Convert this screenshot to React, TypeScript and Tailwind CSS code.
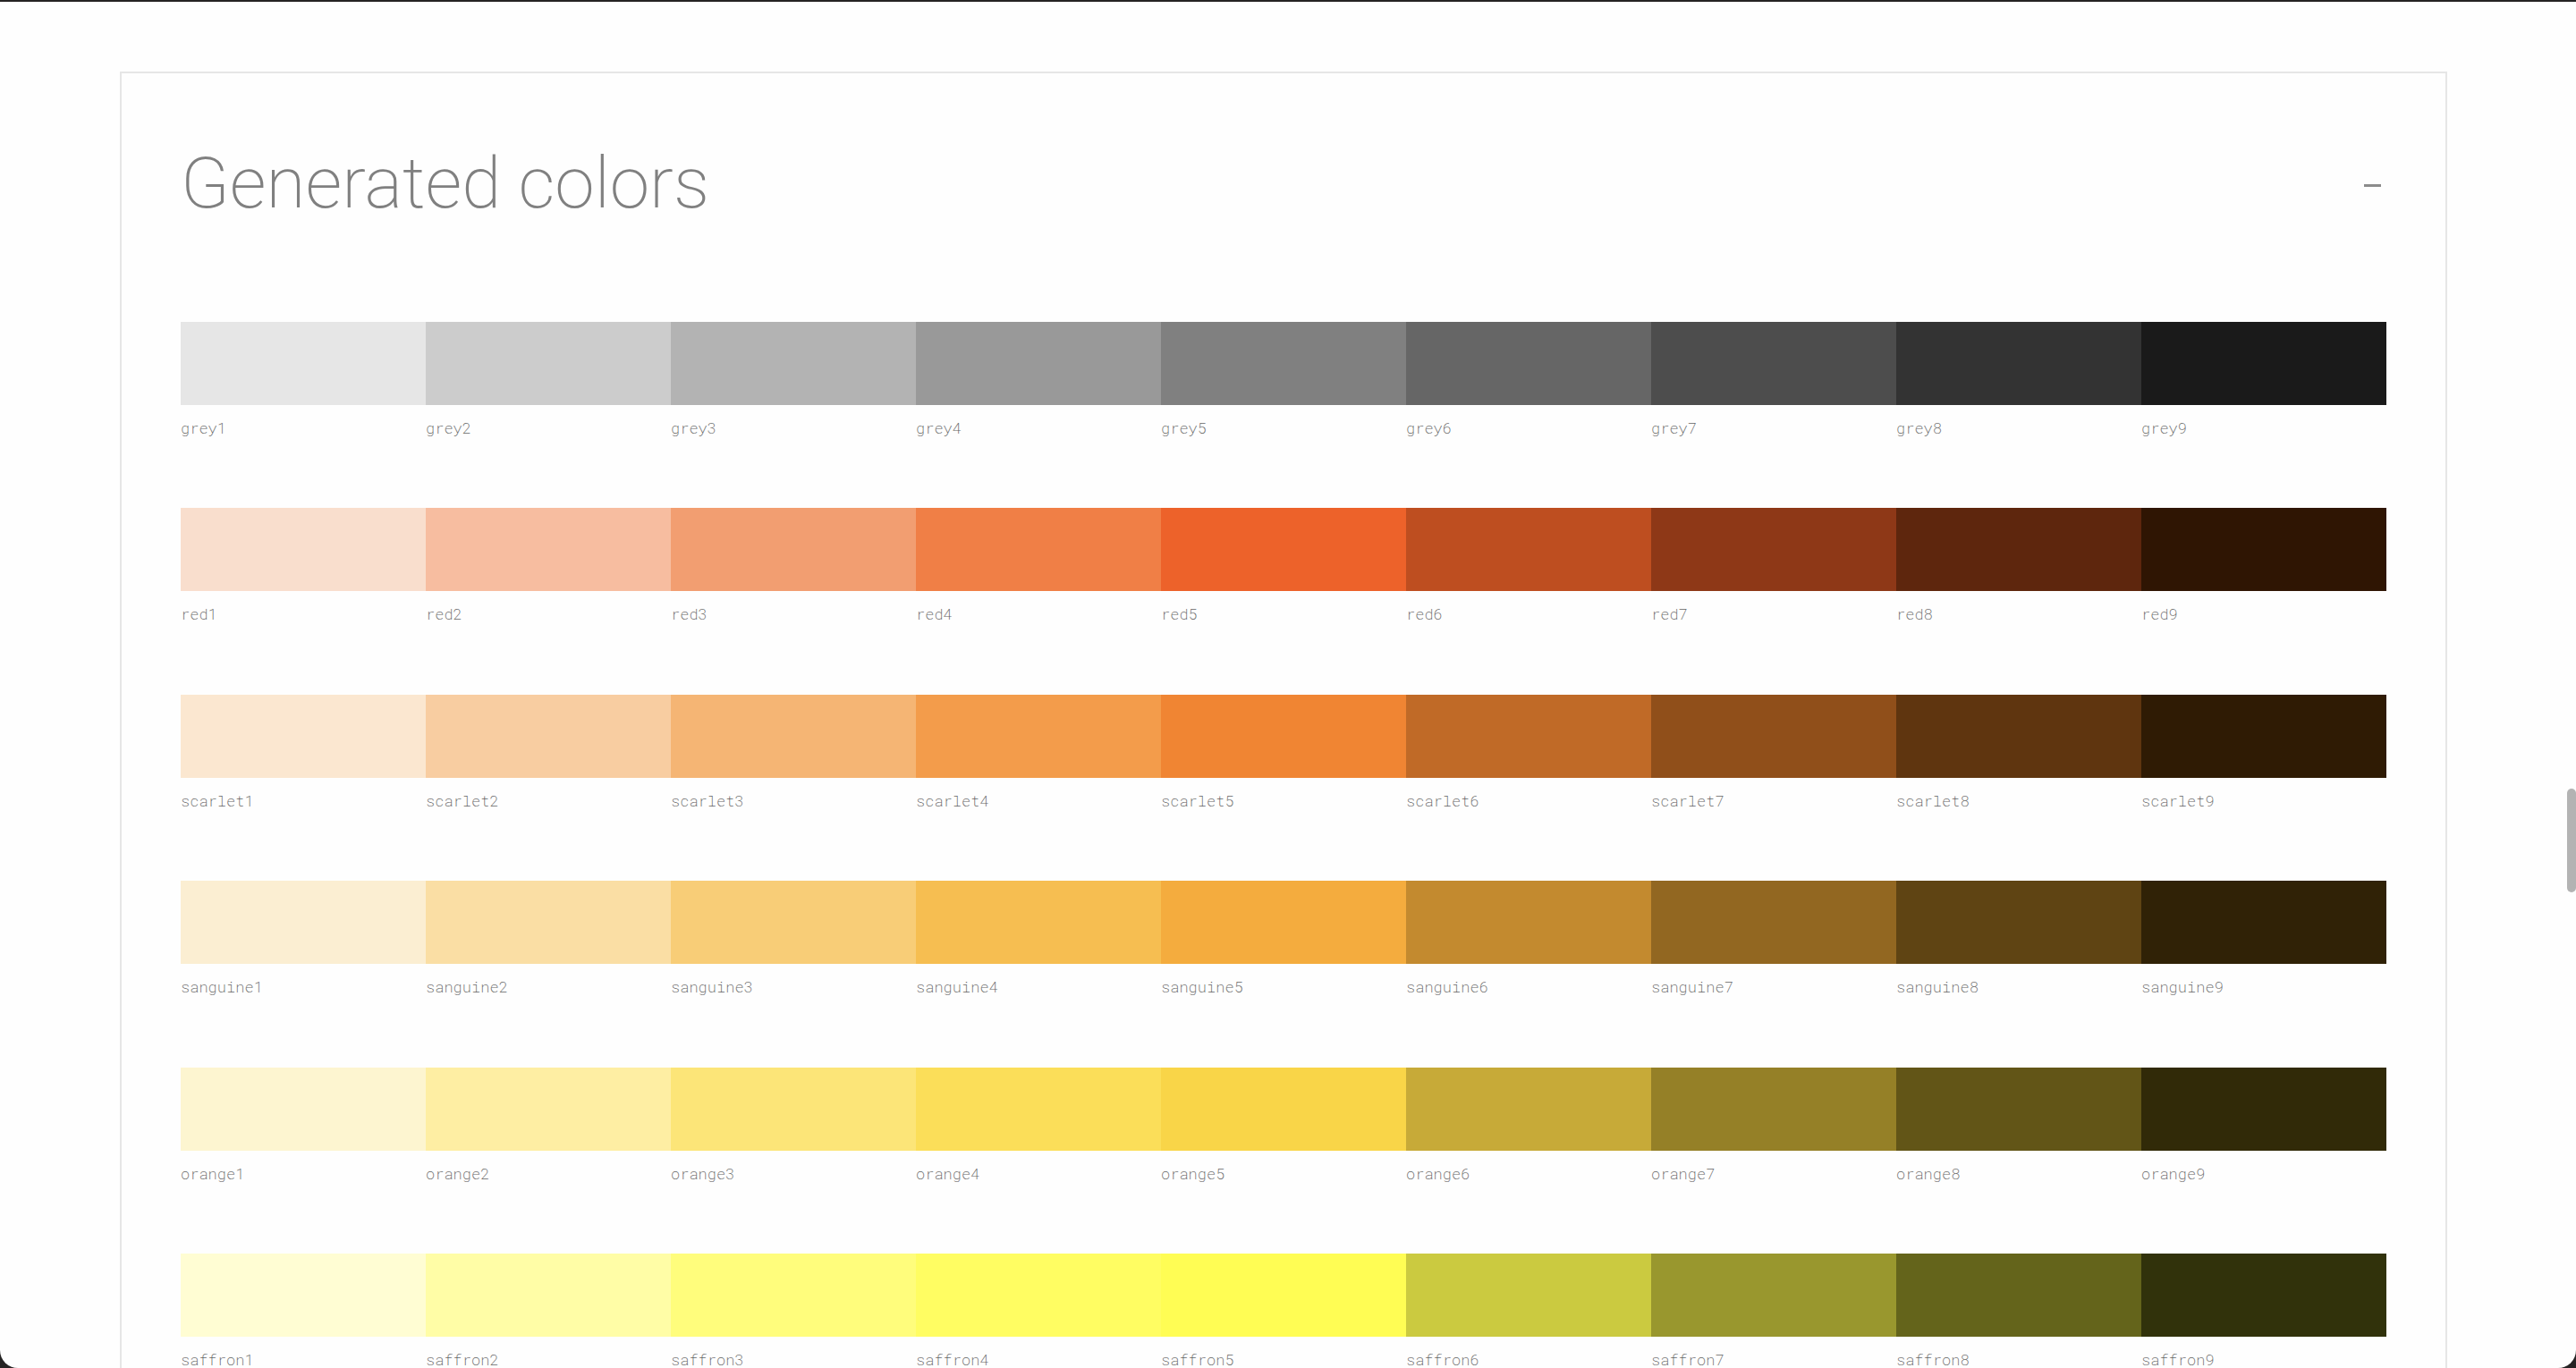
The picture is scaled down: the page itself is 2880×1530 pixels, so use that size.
import { useState } from "react";

type Palette = { name: string; shades: string[] };

const palettes: Palette[] = [
  {
    name: "grey",
    shades: ["#e6e6e6", "#cccccc", "#b3b3b3", "#999999", "#808080", "#666666", "#4d4d4d", "#333333", "#1a1a1a"],
  },
  {
    name: "red",
    shades: ["#f9decd", "#f7bda0", "#f29e71", "#f07f46", "#ed622a", "#be4e20", "#8e3817", "#5e260d", "#2f1503"],
  },
  {
    name: "scarlet",
    shades: ["#fbe7d0", "#f8cda1", "#f5b574", "#f39c4b", "#f08533", "#c06a27", "#904f1a", "#5f350f", "#2f1b04"],
  },
  {
    name: "sanguine",
    shades: ["#fbeed2", "#fadea4", "#f8cd77", "#f6be51", "#f4ac3e", "#c38a2f", "#926721", "#5f4413", "#302206"],
  },
  {
    name: "orange",
    shades: ["#fdf5d0", "#feeea3", "#fce578", "#fbde59", "#f9d548", "#c7aa38", "#958027", "#625517", "#312a08"],
  },
  {
    name: "saffron",
    shades: ["#fffdd3", "#fffda6", "#fffd7c", "#fffd62", "#fffd54", "#cbca40", "#99972e", "#64641b", "#31320b"],
  },
];

function PaletteRow({ name, shades }: Palette) {
  return (
    <ul className="grid grid-cols-9">
      {shades.map((shade, i) => (
        <li key={shade}>
          <div className="h-[93px]" style={{ backgroundColor: shade }} />
          <p className="pt-3.5 font-['Roboto_Mono','Liberation_Mono',monospace] text-[17px] leading-snug font-extralight text-[#666666]">
            {name}
            {i + 1}
          </p>
        </li>
      ))}
    </ul>
  );
}

export default function App() {
  const [open, setOpen] = useState(true);

  return (
    <div className="relative h-screen overflow-hidden bg-[#252323] pt-0.5 font-[Roboto,sans-serif]">
      <main className="h-full overflow-hidden rounded-b-[20px] bg-[#fefefe] pt-[78px] pr-[144px] pl-[134px]">
        <section className="min-h-full border-2 border-[#e6e6e6] px-[66px] pt-[83px]">
          <header className="mb-[115px] flex items-end justify-between">
            <h2 className="text-[80px] leading-[80px] font-extralight text-[#808080]">Generated colors</h2>
            <button
              type="button"
              aria-label="Toggle generated colors"
              aria-expanded={open}
              onClick={() => setOpen(!open)}
              className="flex h-[76px] w-8 items-center justify-center"
            >
              <span className="h-[3px] w-[19px] bg-[#8c8c8c]" />
            </button>
          </header>
          {open && (
            <div className="flex flex-col gap-[78px]">
              {palettes.map((p) => (
                <PaletteRow key={p.name} {...p} />
              ))}
            </div>
          )}
        </section>
      </main>
      <div className="absolute top-[882px] right-0 h-[116px] w-2.5 rounded-[5px] bg-[#b3b3b3]" />
    </div>
  );
}
